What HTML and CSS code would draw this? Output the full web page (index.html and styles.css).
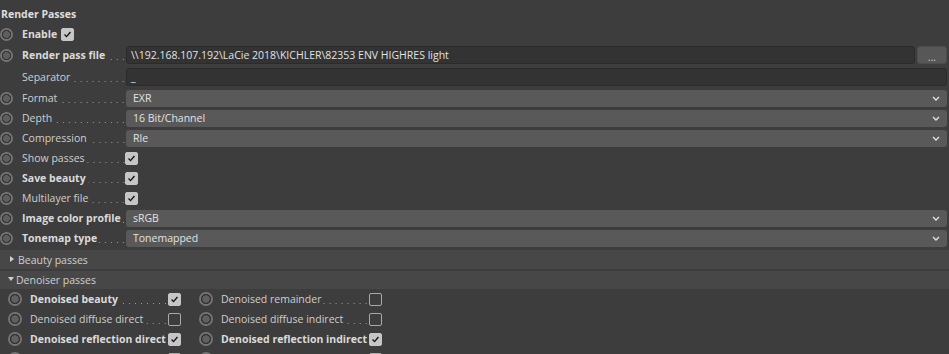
FILE: index.html
```html
<!DOCTYPE html>
<html>
<head>
<meta charset="utf-8">
<link rel="stylesheet" href="styles.css">
</head>
<body>
<div class="panel">
  <div class="title">Render Passes</div>

  <div class="row">
    <span class="radio"></span>
    <span class="label bold">Enable</span>
    <span class="check on"><svg viewBox="0 0 13 13"><path d="M3 6.6 L5.4 9 L10 3.6"/></svg></span>
  </div>

  <div class="row tall">
    <span class="radio"></span>
    <span class="lbl"><span class="label bold">Render pass file</span><span class="leader"></span></span>
    <span class="input wide">\\192.168.107.192\LaCie 2018\KICHLER\82353 ENV HIGHRES light</span>
    <span class="btn">...</span>
  </div>

  <div class="row tall">
    <span class="radio hidden"></span>
    <span class="lbl"><span class="label">Separator</span><span class="leader"></span></span>
    <span class="input wide">_</span>
  </div>

  <div class="row">
    <span class="radio"></span>
    <span class="lbl"><span class="label">Format</span><span class="leader"></span></span>
    <span class="select">EXR<svg class="chev" viewBox="0 0 8 5"><path d="M1 1 L4 4 L7 1"/></svg></span>
  </div>

  <div class="row">
    <span class="radio"></span>
    <span class="lbl"><span class="label">Depth</span><span class="leader"></span></span>
    <span class="select">16 Bit/Channel<svg class="chev" viewBox="0 0 8 5"><path d="M1 1 L4 4 L7 1"/></svg></span>
  </div>

  <div class="row">
    <span class="radio"></span>
    <span class="lbl"><span class="label">Compression</span><span class="leader"></span></span>
    <span class="select">Rle<svg class="chev" viewBox="0 0 8 5"><path d="M1 1 L4 4 L7 1"/></svg></span>
  </div>

  <div class="row">
    <span class="radio"></span>
    <span class="lbl"><span class="label">Show passes</span><span class="leader"></span></span>
    <span class="check on"><svg viewBox="0 0 13 13"><path d="M3 6.6 L5.4 9 L10 3.6"/></svg></span>
  </div>

  <div class="row">
    <span class="radio"></span>
    <span class="lbl"><span class="label bold">Save beauty</span><span class="leader"></span></span>
    <span class="check on"><svg viewBox="0 0 13 13"><path d="M3 6.6 L5.4 9 L10 3.6"/></svg></span>
  </div>

  <div class="row">
    <span class="radio"></span>
    <span class="lbl"><span class="label">Multilayer file</span><span class="leader"></span></span>
    <span class="check on"><svg viewBox="0 0 13 13"><path d="M3 6.6 L5.4 9 L10 3.6"/></svg></span>
  </div>

  <div class="row">
    <span class="radio"></span>
    <span class="lbl"><span class="label bold">Image color profile</span><span class="leader"></span></span>
    <span class="select">sRGB<svg class="chev" viewBox="0 0 8 5"><path d="M1 1 L4 4 L7 1"/></svg></span>
  </div>

  <div class="row">
    <span class="radio"></span>
    <span class="lbl"><span class="label bold">Tonemap type</span><span class="leader"></span></span>
    <span class="select">Tonemapped<svg class="chev" viewBox="0 0 8 5"><path d="M1 1 L4 4 L7 1"/></svg></span>
  </div>

  <div class="bar"><span class="tri right"></span>Beauty passes</div>
  <div class="bar open"><span class="tri down"></span>Denoiser passes</div>

  <div class="drow">
    <div class="cell c1">
      <span class="radio big"></span>
      <span class="dlbl w1"><span class="label bold">Denoised beauty</span><span class="leader"></span></span>
      <span class="check on"><svg viewBox="0 0 13 13"><path d="M3 6.6 L5.4 9 L10 3.6"/></svg></span>
    </div>
    <div class="cell">
      <span class="radio big"></span>
      <span class="dlbl w2"><span class="label">Denoised remainder</span><span class="leader"></span></span>
      <span class="check"></span>
    </div>
  </div>

  <div class="drow">
    <div class="cell c1">
      <span class="radio big"></span>
      <span class="dlbl w1"><span class="label">Denoised diffuse direct</span><span class="leader"></span></span>
      <span class="check"></span>
    </div>
    <div class="cell">
      <span class="radio big"></span>
      <span class="dlbl w2"><span class="label">Denoised diffuse indirect</span><span class="leader"></span></span>
      <span class="check"></span>
    </div>
  </div>

  <div class="drow">
    <div class="cell c1">
      <span class="radio big"></span>
      <span class="dlbl w1"><span class="label bold">Denoised reflection direct</span><span class="leader"></span></span>
      <span class="check on"><svg viewBox="0 0 13 13"><path d="M3 6.6 L5.4 9 L10 3.6"/></svg></span>
    </div>
    <div class="cell">
      <span class="radio big"></span>
      <span class="dlbl w2"><span class="label bold">Denoised reflection indirect</span><span class="leader"></span></span>
      <span class="check on"><svg viewBox="0 0 13 13"><path d="M3 6.6 L5.4 9 L10 3.6"/></svg></span>
    </div>
  </div>

  <div class="drow">
    <div class="cell c1">
      <span class="radio big"></span>
      <span class="dlbl w1"></span>
      <span class="check"></span>
    </div>
    <div class="cell">
      <span class="radio big"></span>
      <span class="dlbl w2"></span>
      <span class="check"></span>
    </div>
  </div>
</div>
</body>
</html>
```

FILE: styles.css
```css
html, body {
  margin: 0;
  padding: 0;
  background: #3d3d3d;
  overflow: hidden;
}

.panel {
  font-family: "Open Sans", "Noto Sans", sans-serif;
  font-size: 10.5px;
  color: #cfcfcf;
  padding-right: 2px;
  white-space: nowrap;
}

.title {
  height: 20px;
  padding-top: 4px;
  padding-left: 1px;
  display: flex;
  align-items: center;
  font-weight: bold;
  color: #dedede;
}

.row {
  height: 20px;
  display: flex;
  align-items: center;
}

.row.tall {
  height: 22px;
}

.radio {
  flex: none;
  width: 13px;
  height: 13px;
  margin-left: 0;
  margin-right: 9px;
  border-radius: 50%;
  background: radial-gradient(circle, #5e5e5e 0, #5e5e5e 3.2px, #343434 3.8px, #343434 4.4px, #757575 5px, #757575 6.5px);
}

.radio.hidden {
  visibility: hidden;
}

.radio.big {
  width: 14px;
  height: 14px;
  margin-left: 0;
  margin-right: 8px;
  background: radial-gradient(circle, #606060 0, #606060 3.4px, #333333 4px, #333333 4.8px, #747474 5.4px, #747474 7px);
}

.label {
  flex: none;
}

.bold {
  font-weight: bold;
  color: #dadada;
}

.lbl {
  flex: none;
  width: 104px;
  height: 20px;
  display: flex;
  align-items: center;
  overflow: hidden;
}

.leader {
  flex: 1;
  align-self: stretch;
  margin-left: 2px;
  margin-right: 1px;
  background-image: linear-gradient(90deg, transparent 4px, #9a9a9a 4px, #9a9a9a 5px, transparent 5px);
  background-size: 6px 1px;
  background-repeat: repeat-x;
  background-position: right 0 top 14px;
}

.row.tall .lbl {
  height: 22px;
}

.row.tall .leader {
  background-position: right 0 top 15px;
}

.check {
  flex: none;
  width: 11px;
  height: 11px;
  border: 1px solid #a9a9a9;
  border-radius: 2px;
  box-sizing: content-box;
  margin-left: 4px;
  display: flex;
}

.lbl + .check {
  margin-left: -1px;
}

.check.on {
  background: #c6c6c6;
  border-color: #c6c6c6;
}

.check svg {
  width: 11px;
  height: 11px;
}

.check svg path {
  fill: none;
  stroke: #111;
  stroke-width: 1.6;
}

.input {
  flex: 1;
  height: 16px;
  background: #333333;
  border: 1px solid #2b2b2b;
  border-radius: 3px;
  padding-left: 4px;
  display: flex;
  align-items: center;
  color: #e2e2e2;
}

.btn {
  flex: none;
  width: 28px;
  height: 16px;
  margin-left: 2px;
  background: #575757;
  border: 1px solid #4c4c4c;
  border-radius: 3px;
  display: flex;
  align-items: flex-end;
  justify-content: center;
  line-height: 11px;
  color: #d0d0d0;
  font-size: 10px;
}

.select {
  flex: 1;
  height: 17px;
  background: #595959;
  border-radius: 3px;
  padding-left: 7px;
  padding-right: 7px;
  display: flex;
  align-items: center;
  color: #e2e2e2;
}

.chev {
  margin-left: auto;
  width: 8px;
  height: 5px;
}

.chev path {
  fill: none;
  stroke: #e6e6e6;
  stroke-width: 1.3;
}

.bar {
  height: 19px;
  margin-top: 2px;
  margin-right: -2px;
  background: #474747;
  display: flex;
  align-items: center;
  color: #cfcfcf;
  padding-left: 9px;
}

.bar.open {
  height: 18px;
}

.tri {
  flex: none;
  width: 0;
  height: 0;
}

.tri.right {
  border-top: 3.5px solid transparent;
  border-bottom: 3.5px solid transparent;
  border-left: 4px solid #d0d0d0;
  margin-left: 1px;
  margin-right: 4px;
  margin-top: -2px;
}

.tri.down {
  border-left: 3.5px solid transparent;
  border-right: 3.5px solid transparent;
  border-top: 4px solid #d0d0d0;
  margin-left: -1px;
  margin-right: 2px;
  margin-top: -2px;
}

.drow {
  height: 20px;
  display: flex;
  align-items: center;
}

.cell {
  display: flex;
  align-items: center;
  flex: none;
}

.cell.c1 {
  padding-left: 8px;
  width: 199px;
  box-sizing: border-box;
}

.dlbl {
  flex: none;
  height: 20px;
  display: flex;
  align-items: center;
  overflow: hidden;
}

.dlbl.w1 {
  width: 138px;
}

.dlbl.w2 {
  width: 148px;
}

.dlbl + .check {
  margin-left: 0;
}
```
